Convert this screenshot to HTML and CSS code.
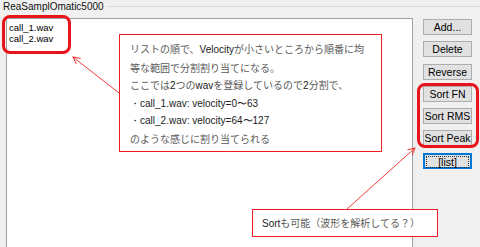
FILE: index.html
```html
<!DOCTYPE html>
<html lang="ja">
<head>
    <meta charset="UTF-8">
    <title>ReaSamplOmatic5000</title>
    <link rel="stylesheet" href="styles.css">
</head>
<body>
    <div class="frame">
        <div class="legend">
            <span class="legend-title">ReaSamplOmatic5000</span>
            <span class="legend-line"></span>
        </div>

        <div class="main">
            <!-- sample list -->
            <div class="listbox">
                <div class="item">call_1.wav</div>
                <div class="item">call_2.wav</div>
            </div>

            <!-- buttons on the right -->
            <div class="buttons">
                <button>Add...</button>
                <button>Delete</button>
                <button>Reverse</button>
                <button>Sort FN</button>
                <button>Sort RMS</button>
                <button>Sort Peak</button>
                <button class="focused"><span>[list]</span></button>
            </div>
        </div>

        <!-- annotations -->
        <div class="note note-list">
            <p>リストの順で、<span class="en">Velocity</span>が小さいところから順番に均</p>
            <p>等な範囲で分割割り当てになる。</p>
            <p>ここでは<span class="en">2</span>つの<span class="en">wav</span>を登録しているので<span class="en">2</span>分割で、</p>
            <p class="en">・call_1.wav: velocity=0〜63</p>
            <p class="en">・call_2.wav: velocity=64〜127</p>
            <p>のような感じに割り当てられる</p>
        </div>
        <div class="note note-sort">
            <p><span class="en">Sort</span>も可能（波形を解析してる？）</p>
        </div>

        <div class="ring ring-list"></div>
        <div class="ring ring-sort"></div>

        <svg class="arrows" width="480" height="247" viewBox="0 0 480 247">
            <defs>
                <marker id="head" markerWidth="9" markerHeight="9" refX="8" refY="4.5" orient="auto" markerUnits="userSpaceOnUse">
                    <path d="M1,1 L8,4.5 L1,8" fill="none" stroke="#f23a3a" stroke-width="1"/>
                </marker>
            </defs>
            <line x1="119" y1="93" x2="73" y2="57" stroke="#f23a3a" stroke-width="1" marker-end="url(#head)"/>
            <line x1="347" y1="209" x2="415" y2="148" stroke="#f23a3a" stroke-width="1" marker-end="url(#head)"/>
        </svg>
    </div>
</body>
</html>
```

FILE: styles.css
```css
html, body {
    margin: 0;
    padding: 0;
}
body {
    background: #f0f0f0;
    font-family: "Liberation Sans", Arial, sans-serif;
    color: #000;
    overflow: hidden;
}
.frame {
    position: relative;
    width: 480px;
    height: 247px;
    display: flex;
    flex-direction: column;
    overflow: hidden;
}
.legend {
    display: flex;
    align-items: flex-start;
    height: 13px;
    font-size: 10px;
    line-height: 13px;
}
.legend-title {
    padding-left: 3px;
    color: #111;
}
.legend-line {
    flex: 1;
    margin: 6px 0 0 3px;
    border-top: 1px solid #d8d8d8;
}
.main {
    display: flex;
    flex: 1;
    margin-top: 5px;
}
.listbox {
    box-sizing: border-box;
    width: 407px;
    height: 260px;
    margin-left: 6px;
    padding: 3px 0 0 2px;
    background: #fff;
    border: 1px solid #a0a0a0;
    font-size: 9.5px;
    line-height: 11px;
}
.buttons {
    display: flex;
    flex-direction: column;
    gap: 6.3px;
    padding: 1px 0 0 10px;
}
.buttons button {
    box-sizing: border-box;
    width: 49px;
    height: 16px;
    padding: 0;
    border: 1px solid #adadad;
    background: #e1e1e1;
    font-family: "Liberation Sans", Arial, sans-serif;
    font-size: 10.5px;
    line-height: 14px;
    color: #000;
    white-space: nowrap;
    overflow: visible;
}
.buttons button.focused {
    border: 2px solid #0078d7;
    padding: 1px;
}
.buttons button.focused span {
    display: block;
    height: 10px;
    line-height: 10px;
    border: 1px dotted #333;
}
.note {
    position: absolute;
    box-sizing: border-box;
    background: #fff;
    border: 1px solid #ee1c24;
    font-family: "Noto Sans CJK JP", "Liberation Sans", sans-serif;
    font-size: 10px;
    color: #5a5a5a;
    white-space: nowrap;
}
.note p {
    margin: 0;
}
.note .en {
    font-family: "Liberation Sans", Arial, sans-serif;
    color: #222;
}
.note-list {
    left: 119px;
    top: 34px;
    width: 263px;
    height: 118px;
    padding: 5px 0 0 10px;
    line-height: 17.5px;
}
.note-sort {
    left: 252px;
    top: 209px;
    width: 186px;
    height: 28px;
    padding: 0 0 0 9px;
    line-height: 26px;
}
.ring {
    position: absolute;
    box-sizing: border-box;
    border: 3px solid #e8141b;
    border-radius: 8px;
}
.ring-list {
    left: 2px;
    top: 15px;
    width: 69px;
    height: 39px;
}
.ring-sort {
    left: 417px;
    top: 83px;
    width: 62px;
    height: 65px;
}
.arrows {
    position: absolute;
    left: 0;
    top: 0;
    pointer-events: none;
}
```
